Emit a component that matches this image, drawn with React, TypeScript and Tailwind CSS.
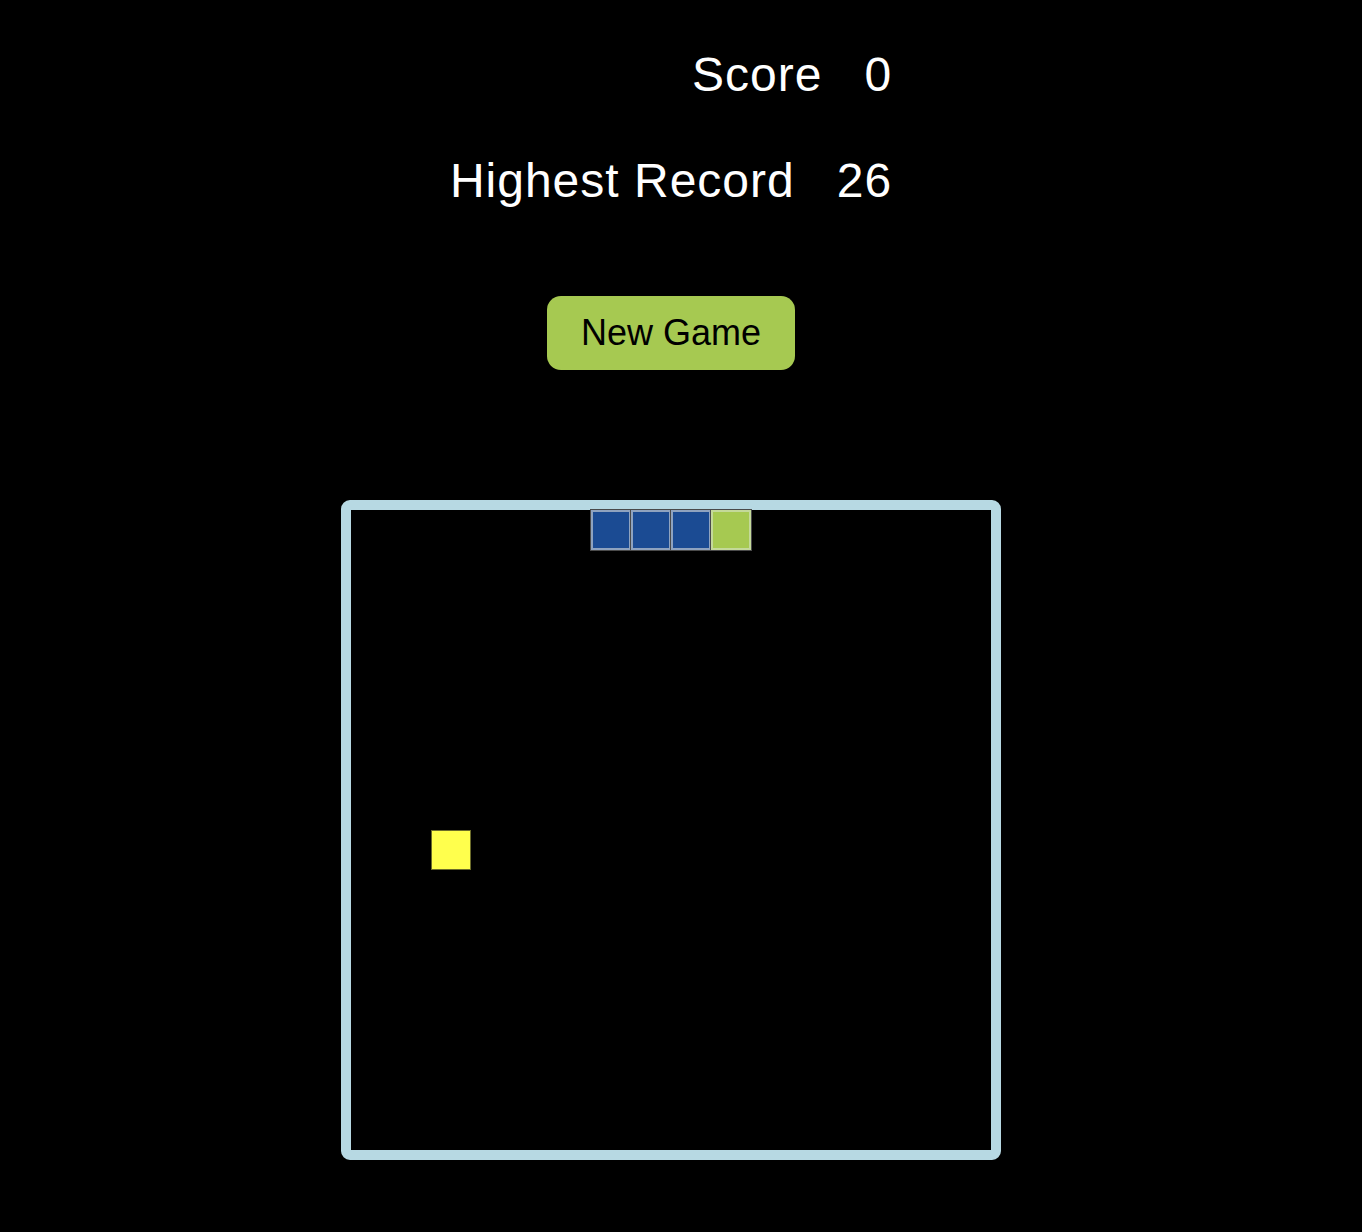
import React from 'react';

type Cell = { x: number; y: number };

// 16 x 16 board, 40px per cell
const snake: Cell[] = [
  { x: 6, y: 0 },
  { x: 7, y: 0 },
  { x: 8, y: 0 },
  { x: 9, y: 0 },
];
const food: Cell = { x: 2, y: 8 };

const colStart = [
  'col-start-1', 'col-start-2', 'col-start-3', 'col-start-4',
  'col-start-5', 'col-start-6', 'col-start-7', 'col-start-8',
  'col-start-9', 'col-start-10', 'col-start-11', 'col-start-12',
  'col-start-13', 'col-start-14', 'col-start-15', 'col-start-16',
];
const rowStart = [
  'row-start-1', 'row-start-2', 'row-start-3', 'row-start-4',
  'row-start-5', 'row-start-6', 'row-start-7', 'row-start-8',
  'row-start-9', 'row-start-10', 'row-start-11', 'row-start-12',
  'row-start-13', 'row-start-14', 'row-start-15', 'row-start-16',
];

const App: React.FC = () => {
  const score = 0;
  const highest = 26;

  return (
    <div
      className="min-h-screen w-full bg-black text-white flex flex-col items-center pr-[20px]"
      style={{ fontFamily: '"Liberation Sans", Arial, sans-serif' }}
    >
      {/* Scores */}
      <div className="mt-[47px] flex flex-col items-end gap-[50px] text-[48px] leading-[56px] tracking-[1px]">
        <div className="flex gap-[42px]">
          <span>Score</span>
          <span>{score}</span>
        </div>
        <div className="flex gap-[42px]">
          <span>Highest Record</span>
          <span>{highest}</span>
        </div>
      </div>

      <button className="mt-[87px] w-[248px] h-[74px] rounded-[14px] bg-[#a6c951] text-black text-[36px] leading-none">
        New Game
      </button>

      {/* Board */}
      <div className="mt-[130px] mb-[73px] border-[10px] border-[#b7d9e3] rounded-[9px] bg-black">
        <div className="w-[640px] h-[640px] grid grid-cols-16 grid-rows-16">
          {snake.map((c, i) => {
            const head = i === snake.length - 1;
            return (
              <div
                key={i}
                className={`${colStart[c.x]} ${rowStart[c.y]} border-2 ${
                  head
                    ? 'bg-[#a6c951] border-[#c4d99a]'
                    : 'bg-[#1b4b93] border-[#8fa3bf]'
                } shadow-[0_0_0_1px_#4a4a4a]`}
              />
            );
          })}
          <div
            className={`${colStart[food.x]} ${rowStart[food.y]} bg-[#ffff4d] border border-[#6b6b2a]`}
          />
        </div>
      </div>
    </div>
  );
};

export default App;
